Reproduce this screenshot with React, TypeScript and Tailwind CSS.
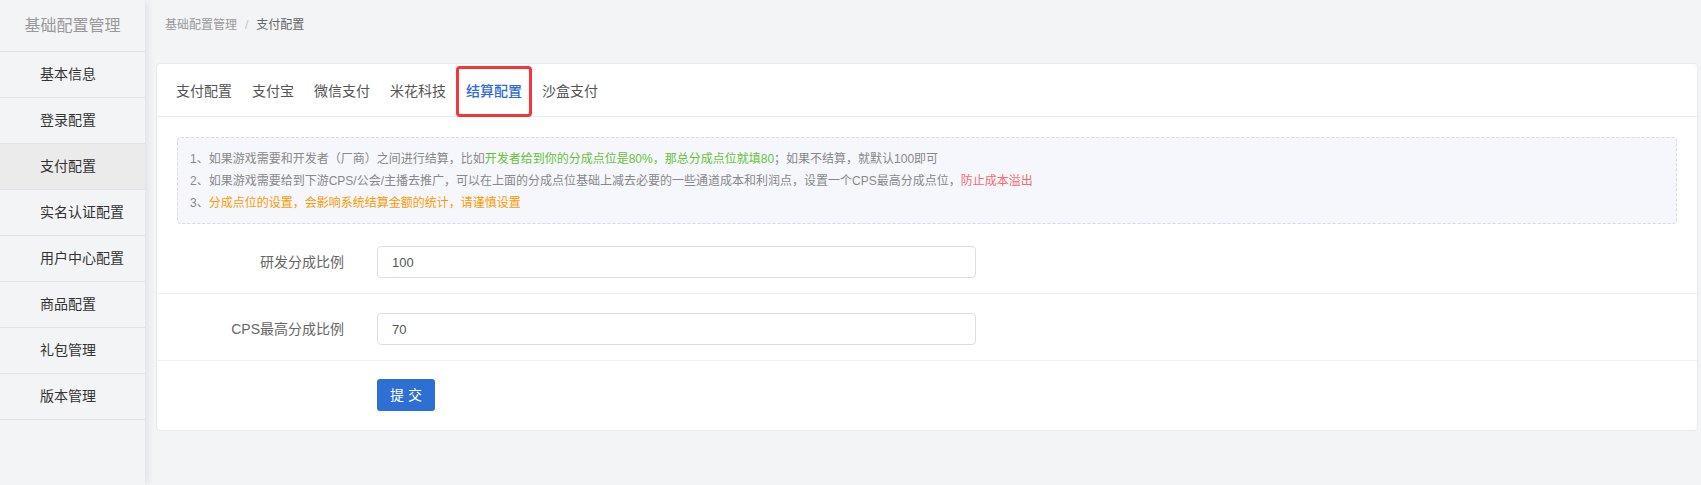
import React from "react";

const MENU = ["基本信息", "登录配置", "支付配置", "实名认证配置", "用户中心配置", "商品配置", "礼包管理", "版本管理"];
const TABS = ["支付配置", "支付宝", "微信支付", "米花科技", "结算配置", "沙盒支付"];
const ACTIVE_MENU = "支付配置";
const ACTIVE_TAB = "结算配置";

const FIELDS = [
  { label: "研发分成比例", value: "100" },
  { label: "CPS最高分成比例", value: "70" },
];

export default function App() {
  return (
    <div className="flex h-[485px] w-full overflow-hidden bg-[#f3f4f6] font-[family-name:'Liberation_Sans','Noto_Sans_CJK_SC',sans-serif]">
      <Sidebar />
      <main className="flex-1 pl-[11px] pr-[3px]">
        <Breadcrumb />
        <SettleCard />
      </main>
    </div>
  );
}

/* ── left menu ─────────────────────────────────────────── */
function Sidebar() {
  return (
    <aside className="relative z-10 w-[145px] shrink-0 bg-[#f3f4f6] shadow-[4px_0_8px_-2px_rgba(30,40,80,0.10)]">
      <div className="flex h-[52px] items-center justify-center border-b border-[#e1e2e6] text-[16px] text-[#999]">
        基础配置管理
      </div>
      {MENU.map((item) => (
        <div
          key={item}
          className={
            "flex h-[46px] items-center border-b border-[#e1e2e6] pl-[40px] text-[14px] text-[#333] " +
            (item === ACTIVE_MENU ? "bg-[#ebebeb]" : "")
          }
        >
          {item}
        </div>
      ))}
    </aside>
  );
}

function Breadcrumb() {
  return (
    <div className="flex h-[50px] items-center pl-[9px] text-[12px]">
      <span className="text-[#999]">基础配置管理</span>
      <span className="mx-[8px] text-[#c0c4cc]">/</span>
      <span className="text-[#666]">支付配置</span>
    </div>
  );
}

/* ── card with tabs, notes and form ─────────────────────── */
function SettleCard() {
  return (
    <section className="mt-[13px] rounded-[4px] border border-[#e8eaef] bg-white">
      <div className="flex h-[53px] items-end border-b border-[#e9ebf2] pl-[9px]">
        {TABS.map((tab) => (
          <div
            key={tab}
            className={
              "relative flex h-[50px] items-center px-[10px] text-[14px] " +
              (tab === ACTIVE_TAB ? "font-medium text-[#2f6bd8]" : "text-[#555]")
            }
          >
            {tab}
            {tab === ACTIVE_TAB && (
              <span className="pointer-events-none absolute inset-x-0 top-0 -bottom-[1px] rounded-[4px] border-[3px] border-[#f5363a]" />
            )}
          </div>
        ))}
      </div>

      <div className="px-[20px] pt-[20px] pb-[1px]">
        <div className="rounded-[4px] border border-dashed border-[#d3d9ef] bg-[#f6f7fc] pt-[10px] pb-[9px] pl-[12px] text-[12px] leading-[22px] text-[#888]">
          <p>
            1、如果游戏需要和开发者（厂商）之间进行结算，比如
            <span className="text-[#67c23a]">开发者给到你的分成点位是80%，那总分成点位就填80</span>
            ；如果不结算，就默认100即可
          </p>
          <p>
            2、如果游戏需要给到下游CPS/公会/主播去推广，可以在上面的分成点位基础上减去必要的一些通道成本和利润点，设置一个CPS最高分成点位，
            <span className="text-[#f56c6c]">防止成本溢出</span>
          </p>
          <p>
            3、<span className="text-[#ff9900]">分成点位的设置，会影响系统结算金额的统计，请谨慎设置</span>
          </p>
        </div>
      </div>

      {FIELDS.map((f, i) => (
        <div
          key={f.label}
          className={
            "flex items-center border-b border-[#eef0f4] pb-[15px] " + (i === 0 ? "pt-[21px]" : "pt-[19px]")
          }
        >
          <label className="w-[187px] shrink-0 text-right text-[14px] text-[#666]">{f.label}</label>
          <input
            defaultValue={f.value}
            className="ml-[33px] h-[32px] w-[599px] rounded-[4px] border border-[#dcdee2] px-[14px] text-[13px] text-[#555] outline-none"
          />
        </div>
      ))}

      <div className="pt-[18px] pb-[19px] pl-[220px]">
        <button className="h-[32px] w-[58px] rounded-[3px] bg-[#2d6fd5] text-[14px] text-white">提 交</button>
      </div>
    </section>
  );
}
